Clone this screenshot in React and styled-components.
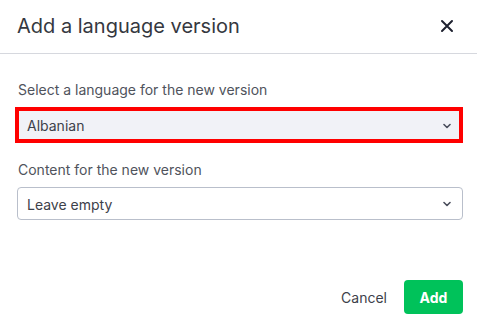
import React from "react";
import styled, { createGlobalStyle } from "styled-components";

const GlobalStyle = createGlobalStyle`
  html, body {
    margin: 0;
    padding: 0;
    background: #ffffff;
  }
  body {
    font-family: Inter, "Noto Sans", sans-serif;
  }
`;

const Dialog = styled.div`
  width: 477px;
  height: 328px;
  background: #fff;
  display: flex;
  flex-direction: column;
  box-sizing: border-box;
`;

const Header = styled.div`
  height: 54px;
  box-sizing: border-box;
  border-bottom: 1px solid #d6d8de;
  display: flex;
  align-items: center;
  justify-content: space-between;
  padding: 0 21px 2px 17px;
`;

const Title = styled.h2`
  margin: 0;
  font-size: 20px;
  font-weight: 400;
  color: #353840;
`;

const CloseButton = styled.button`
  border: none;
  background: none;
  padding: 0;
  width: 18px;
  height: 18px;
  display: flex;
  align-items: center;
  justify-content: center;
  cursor: pointer;
`;

const Body = styled.div`
  flex: 1;
  display: flex;
  flex-direction: column;
  padding: 27px 14px 0 15px;
`;

const Field = styled.div`
  display: flex;
  flex-direction: column;
  margin-bottom: 18px;
`;

const Label = styled.label`
  font-size: 14px;
  color: #4f535c;
  margin: 0 0 8px 3px;
  line-height: 18px;
`;

const SelectBox = styled.div`
  height: ${(p) => (p.$focused ? "36px" : "33px")};
  box-sizing: border-box;
  border: ${(p) => (p.$focused ? "4px solid #ff0000" : "1px solid #b9bfcb")};
  border-radius: ${(p) => (p.$focused ? "0" : "4px")};
  margin-left: ${(p) => (p.$focused ? "0" : "2px")};
  background: ${(p) => (p.$focused ? "#f1f2f7" : "#ffffff")};
  display: flex;
  align-items: center;
  justify-content: space-between;
  padding: ${(p) => (p.$focused ? "1px 8px 0 8px" : "1px 11px 0 9px")};
  font-size: 14px;
  color: #3d414a;
`;

const Chevron = () => (
  <svg width="8" height="6" viewBox="0 0 8 6" fill="none">
    <path d="M1 1.5 L4 4.5 L7 1.5" stroke="#4a4e5c" strokeWidth="1.6" strokeLinecap="round" strokeLinejoin="round" />
  </svg>
);

const Footer = styled.div`
  display: flex;
  justify-content: flex-end;
  align-items: center;
  gap: 17px;
  padding: 0 14px 14px 0;
`;

const TextButton = styled.button`
  border: none;
  background: none;
  font-family: inherit;
  font-size: 14px;
  color: #3d414a;
  padding: 0;
  cursor: pointer;
`;

const PrimaryButton = styled.button`
  border: none;
  background: #00c25a;
  color: #ffffff;
  font-family: inherit;
  font-weight: 700;
  font-size: 14px;
  width: 59px;
  height: 34px;
  border-radius: 4px;
  cursor: pointer;
`;

export default function App() {
  return (
    <>
      <GlobalStyle />
      <Dialog>
        <Header>
          <Title>Add a language version</Title>
          <CloseButton aria-label="Close">
            <svg width="14" height="14" viewBox="0 0 14 14">
              <path d="M2 2 L12 12 M12 2 L2 12" stroke="#1e2130" strokeWidth="2" strokeLinecap="round" />
            </svg>
          </CloseButton>
        </Header>
        <Body>
          <Field>
            <Label>Select a language for the new version</Label>
            <SelectBox $focused>
              <span>Albanian</span>
              <Chevron />
            </SelectBox>
          </Field>
          <Field>
            <Label>Content for the new version</Label>
            <SelectBox>
              <span>Leave empty</span>
              <Chevron />
            </SelectBox>
          </Field>
        </Body>
        <Footer>
          <TextButton>Cancel</TextButton>
          <PrimaryButton>Add</PrimaryButton>
        </Footer>
      </Dialog>
    </>
  );
}
